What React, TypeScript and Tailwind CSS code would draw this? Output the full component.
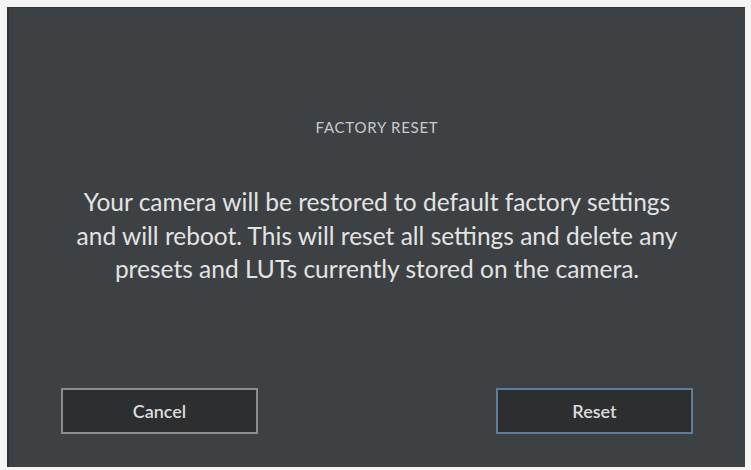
export default function App() {
  return (
    <div
      className="w-[751px] h-[470px] bg-[#f4f4f4] pt-[7px] pl-[7px]"
      style={{ fontFamily: 'Lato, "Open Sans", sans-serif' }}
    >
      <div className="w-[738px] h-[460px] bg-[#3e4144] border-l-2 border-t border-[#2f3133] flex flex-col items-center">
        {/* Title */}
        <div className="pt-[110px] text-[15px] leading-[18px] tracking-[0.05em] text-[#c9cacb]">
          FACTORY RESET
        </div>

        {/* Message */}
        <p className="mt-[49px] w-[720px] text-center text-[24.5px] leading-[33.5px] text-[#e2e3e3]">
          Your camera will be restored to default factory settings
          <br />
          and will reboot. This will reset all settings and delete any
          <br />
          presets and LUTs currently stored on the camera.
        </p>

        {/* Buttons */}
        <div className="mt-auto mb-[33px] w-full flex justify-between pl-[52px] pr-[52px]">
          <button className="w-[197px] h-[46px] bg-[#2c2e30] border-2 border-[#8b8d8f] text-[18px] font-semibold text-[#dcdcdc]">
            Cancel
          </button>
          <button className="w-[197px] h-[46px] bg-[#2c2e30] border-2 border-[#5d7d9c] text-[18px] font-semibold text-[#dcdcdc]">
            Reset
          </button>
        </div>
      </div>
    </div>
  );
}
